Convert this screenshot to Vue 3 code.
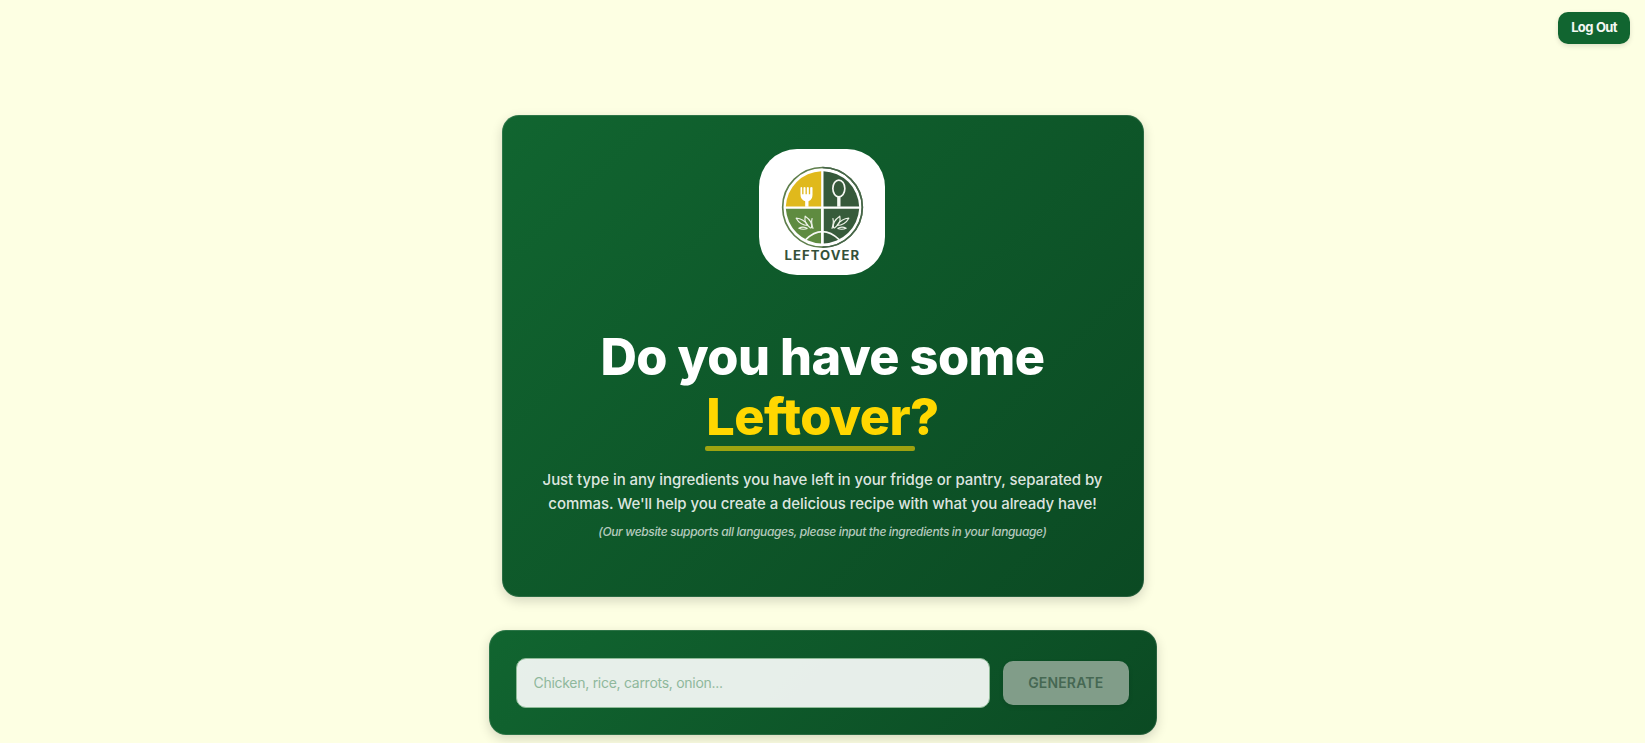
<script setup>
import { ref } from 'vue'

const ingredients = ref('')
</script>

<template>
  <div class="page">
    <header class="topbar">
      <button class="logout" type="button">Log Out</button>
    </header>

    <main class="content">
      <section class="hero">
        <div class="logo">
          <svg viewBox="28.5 28.5 378 378" aria-label="Leftover logo">
            <circle cx="219" cy="203.500" r="119.500" fill="#fff" stroke="#5f7f4c" stroke-width="5" />
            <path d="M215 201H109A111 111 0 0 1 215 95Z" fill="#e0b91c" />
            <path d="M222 201H329A111 111 0 0 0 222 95Z" fill="#36593a" />
            <path d="M215 208H109A111 111 0 0 0 215 312Z" fill="#5f8b40" />
            <path d="M222 208H329A111 111 0 0 1 222 312Z" fill="#375b3b" />
            <path d="M219 84A119.500 119.500 0 0 1 219 323" fill="none" stroke="#46654a" stroke-width="5" />
            <path d="M153 144q3-3 5 0v20h4v-20q3-3 6 0v20h4v-20q3-3 6 0v20h4v-20q4-3 7 0v22q0 15-12 19v17h-10v-17q-14-4-14-19Z" fill="#fff" />
            <ellipse cx="268" cy="147" rx="18" ry="25" fill="none" stroke="#f5f7f2" stroke-width="5" />
            <path d="M268 172v30" stroke="#f5f7f2" stroke-width="10" />
            <path d="M168 301Q218 252 270 301" fill="none" stroke="#f5f7f2" stroke-width="5" />
            <path d="M215 208h7v106h-7z" fill="#fff" />
            <g class="leaf">
              <path d="M184 266C170 257 164 244 167 230C182 240 189 252 186 266" />
              <path d="M176 258C160 257 147 249 140 236C156 237 168 246 176 258" />
              <path d="M174 267Q161 259 148 266Q160 272 174 267" />
              <path d="M191 268Q184 250 188 236" />
            </g>
            <g class="leaf" transform="translate(438 0) scale(-1 1)">
              <path d="M184 266C170 257 164 244 167 230C182 240 189 252 186 266" />
              <path d="M176 258C160 257 147 249 140 236C156 237 168 246 176 258" />
              <path d="M174 267Q161 259 148 266Q160 272 174 267" />
              <path d="M191 268Q184 250 188 236" />
            </g>
            <text x="105" y="362" textLength="227" lengthAdjust="spacingAndGlyphs" class="wordmark">LEFTOVER</text>
          </svg>
        </div>
        <h1 class="title">Do you have some<br /><span class="accent"><span class="marked">Leftover</span>?</span></h1>
        <p class="lead">Just type in any ingredients you have left in your fridge or pantry, separated by<br />commas. We'll help you create a delicious recipe with what you already have!</p>
        <p class="note">(Our website supports all languages, please input the ingredients in your language)</p>
      </section>

      <form class="search" @submit.prevent>
        <input v-model="ingredients" class="field" type="text" placeholder="Chicken, rice, carrots, onion..." />
        <button class="generate" type="submit" disabled>GENERATE</button>
      </form>
    </main>
  </div>
</template>

<style>
body {
  background: #fdffe3;
  overflow: hidden;
}
</style>

<style scoped>
.page,
.page * {
  box-sizing: border-box;
}

.page {
  height: 743px;
  overflow: hidden;
  background: #fdffe3;
  font-family: Inter, "Liberation Sans", sans-serif;
}

.topbar {
  display: flex;
  justify-content: flex-end;
  height: 115px;
  padding: 12px 15px 0 0;
}

.logout {
  width: 72px;
  height: 31.500px;
  padding: 0 0 1px;
  border: 0;
  border-radius: 10px;
  background: #116530;
  color: #f5f8f3;
  font: 700 13px Inter, sans-serif;
  letter-spacing: -0.7px;
  word-spacing: 1px;
  box-shadow: 0 2px 5px rgba(0, 0, 0, 0.12);
}

.content {
  display: flex;
  flex-direction: column;
  align-items: center;
  gap: 33px;
}

.hero,
.search {
  background: linear-gradient(135deg, #116530, #0b4a23);
  border: 1px solid rgba(255, 255, 255, 0.12);
  background-origin: border-box;
  box-shadow: 0 4px 12px rgba(0, 0, 0, 0.16);
}

.hero {
  display: flex;
  flex-direction: column;
  align-items: center;
  width: 642px;
  height: 482px;
  padding-top: 33px;
  border-radius: 17px;
  text-align: center;
  white-space: nowrap;
}

.logo {
  flex: none;
  width: 126px;
  height: 126px;
  margin-right: 1px;
  border-radius: 38px;
  overflow: hidden;
  background: #fff;
}

.logo svg {
  display: block;
  width: 100%;
  height: 100%;
}

.leaf {
  fill: none;
  stroke: #edf2e8;
  stroke-width: 3.5;
  stroke-linejoin: round;
}

.wordmark {
  font: 700 38px Inter, sans-serif;
  letter-spacing: 3px;
  fill: #345139;
}

.title {
  margin: 52px 0 0;
  color: #fff;
  font-size: 50.4px;
  font-weight: 800;
  line-height: 60px;
  letter-spacing: -0.520px;
}

.accent {
  color: #ffd700;
}

.marked {
  position: relative;
}

.marked::after {
  content: "";
  position: absolute;
  left: -1px;
  bottom: -4px;
  width: 210px;
  height: 5px;
  border-radius: 2px;
  background: #ffd700;
  opacity: 0.6;
}

.lead {
  margin: 20.500px 0 0;
  color: rgba(255, 255, 255, 0.87);
  font-size: 15px;
  font-weight: 500;
  line-height: 24px;
  letter-spacing: -0.060px;
}

.note {
  margin: 6px 0 0;
  color: rgba(255, 255, 255, 0.7);
  font-size: 12px;
  font-style: italic;
  font-weight: 500;
  line-height: 19px;
  letter-spacing: -0.360px;
}

.search {
  display: flex;
  align-items: center;
  gap: 13px;
  width: 668px;
  height: 105px;
  padding: 0 27px 0 26.500px;
  border-radius: 17px;
}

.field {
  flex: 1;
  min-width: 0;
  height: 50px;
  padding: 0 16.500px 1px;
  border: 1px solid #8fbb98;
  border-radius: 10px;
  outline: none;
  background: rgba(255, 255, 255, 0.9);
  color: #116530;
  font: 400 14px Inter, sans-serif;
  letter-spacing: -0.280px;
}

.field::placeholder {
  color: #8fb89c;
  opacity: 1;
}

.generate {
  width: 125.500px;
  height: 44px;
  padding: 0 0 1px;
  border: 0;
  border-radius: 10px;
  background: #819d89;
  color: #466853;
  font: 600 14px Inter, sans-serif;
  letter-spacing: 0.150px;
  box-shadow: 0 2px 5px rgba(0, 0, 0, 0.1);
}
</style>
